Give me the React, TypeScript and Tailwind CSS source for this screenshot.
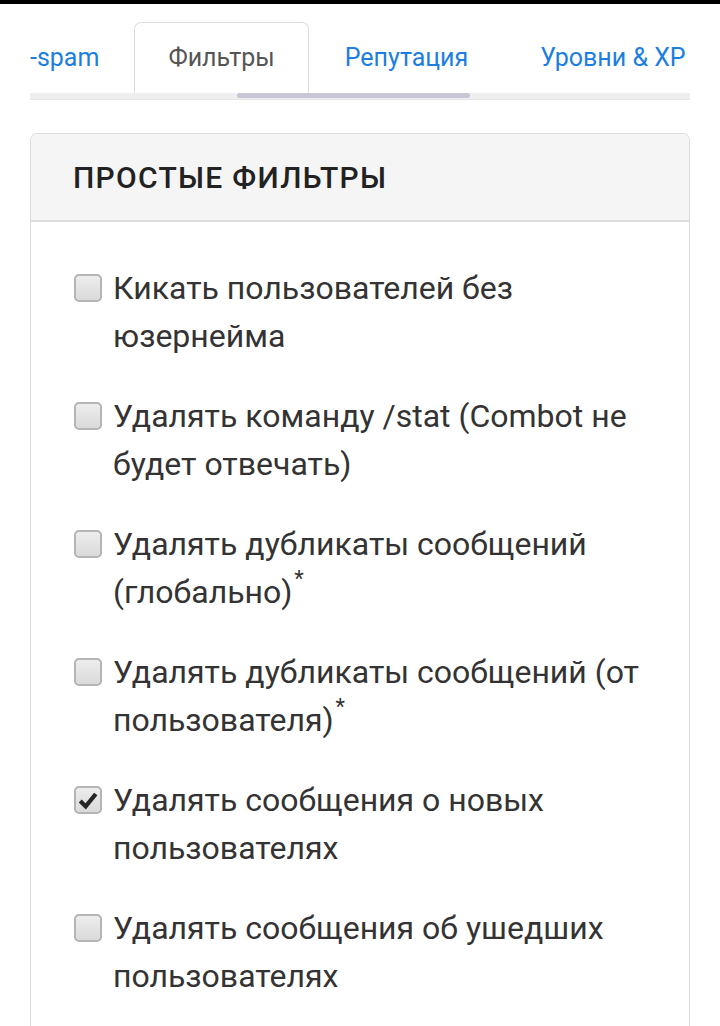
import React from 'react'

const filters = [
  { label: 'Кикать пользователей без юзернейма', checked: false },
  { label: 'Удалять команду /stat (Combot не будет отвечать)', checked: false },
  { label: 'Удалять дубликаты сообщений (глобально)', checked: false, star: true },
  { label: 'Удалять дубликаты сообщений (от пользователя)', checked: false, star: true },
  { label: 'Удалять сообщения о новых пользователях', checked: true },
  { label: 'Удалять сообщения об ушедших пользователях', checked: false },
]

function Checkbox({ checked }: { checked: boolean }) {
  return (
    <span className="mt-[10px] flex h-[28px] w-[28px] shrink-0 items-center justify-center rounded-[5px] border-2 border-[#b5b5b5] bg-gradient-to-b from-[#ededed] to-[#dadada]">
      {checked && (
        <svg viewBox="0 0 24 24" className="h-[22px] w-[22px]">
          <polyline points="3.5,13 9.5,19 20.5,5.5" fill="none" stroke="#262626" strokeWidth="4.6" strokeLinejoin="miter" />
        </svg>
      )}
    </span>
  )
}

export default function App() {
  return (
    <div className="min-h-[1026px] bg-white font-['Roboto',sans-serif]">
      <div className="h-[4px] bg-black" />

      {/* Tabs */}
      <div className="mx-[30px] mt-[18px]">
        <div className="flex items-end text-[25px]">
          <div className="h-[71px] pr-[35px] flex items-center text-[#1c7ee0]">-spam</div>
          <div className="h-[71px] px-[33px] flex items-center rounded-t-[7px] border border-b-0 border-[#dedede] text-[#555]">
            Фильтры
          </div>
          <div className="h-[71px] px-[36px] flex items-center text-[#1c7ee0]">Репутация</div>
          <div className="h-[71px] pl-[36px] flex items-center whitespace-nowrap text-[#1c7ee0]">Уровни &amp; XP</div>
        </div>
        <div className="h-[7px] bg-[#efefef] border-b border-[#e4e4e4]">
          <div className="ml-[207px] h-[5px] w-[233px] rounded-full bg-[#c7c5d6]" />
        </div>
      </div>

      {/* Card */}
      <div className="mx-[30px] mt-[33px] rounded-t-[7px] border border-b-0 border-[#dddddd]">
        <div className="h-[88px] flex items-center rounded-t-[7px] border-b-2 border-[#dddddd] bg-[#f5f5f5] pl-[42px]">
          <h2 className="text-[30px] font-medium tracking-[1.3px] text-[#222]">ПРОСТЫЕ ФИЛЬТРЫ</h2>
        </div>
        <div className="flex flex-col gap-[32px] px-[43px] pt-[42px] pb-[60px]">
          {filters.map(f => (
            <label key={f.label} className="flex gap-[11px] text-[32px] leading-[48px] text-[#333]">
              <Checkbox checked={f.checked} />
              <span>
                {f.label}
                {f.star && (
                  <span className="ml-[2px] inline-block h-[16px] align-top text-[22px] leading-[22px]">*</span>
                )}
              </span>
            </label>
          ))}
        </div>
      </div>
    </div>
  )
}
